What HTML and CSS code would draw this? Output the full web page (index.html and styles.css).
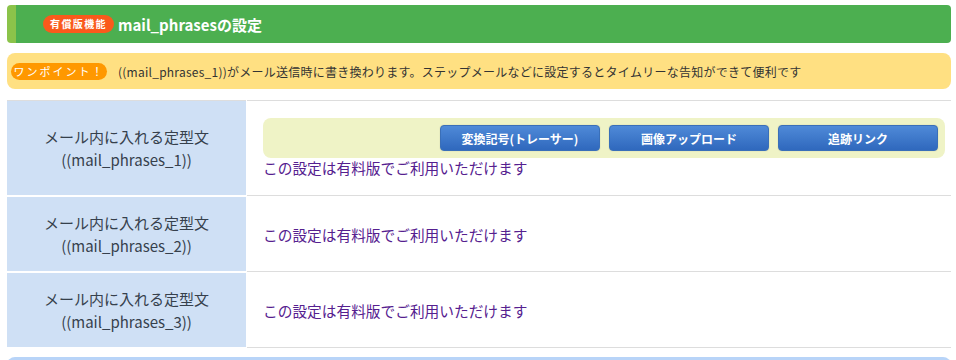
FILE: index.html
```html
<!DOCTYPE html>
<html lang="ja">
<head>
    <meta charset="UTF-8">
    <meta name="viewport" content="width=device-width, initial-scale=1.0">
    <title>mail_phrasesの設定</title>
    <link rel="stylesheet" href="styles.css">
</head>
<body>

    <div class="container">

        <!-- 見出し -->
        <div class="page-title">
            <span class="paid-badge">有償版機能</span>
            <h1>mail_phrasesの設定</h1>
        </div>

        <!-- ワンポイント -->
        <div class="tip">
            <span class="tip-badge">ワンポイント！</span>
            <p>((mail_phrases_1))がメール送信時に書き換わります。ステップメールなどに設定するとタイムリーな告知ができて便利です</p>
        </div>

        <table class="setting-table">
            <tr>
                <th>メール内に入れる定型文<br>((mail_phrases_1))</th>
                <td class="first-cell">
                    <div class="tool-box">
                        <button class="tool-btn">変換記号(トレーサー)</button>
                        <button class="tool-btn">画像アップロード</button>
                        <button class="tool-btn">追跡リンク</button>
                    </div>
                    <span class="paid-note">この設定は有料版でご利用いただけます</span>
                </td>
            </tr>
            <tr>
                <th>メール内に入れる定型文<br>((mail_phrases_2))</th>
                <td><span class="paid-note">この設定は有料版でご利用いただけます</span></td>
            </tr>
            <tr>
                <th>メール内に入れる定型文<br>((mail_phrases_3))</th>
                <td><span class="paid-note">この設定は有料版でご利用いただけます</span></td>
            </tr>
        </table>

        <div class="next-bar"></div>

    </div>

</body>
</html>
```

FILE: styles.css
```css
body {
    font-family: "Noto Sans CJK JP", "Noto Sans", sans-serif;
    background-color: #fff;
    color: #333;
    margin: 0;
    padding: 0;
}
.container {
    padding: 5px 5px 0 7px;
}
.page-title {
    display: flex;
    align-items: center;
    height: 38px;
    background-color: #4caf50;
    border-left: 9px solid #8bc34a;
    border-radius: 4px;
    padding-left: 27px;
}
.page-title h1 {
    margin: 0 0 0 4px;
    font-size: 15px;
    font-weight: bold;
    color: #fff;
}
.paid-badge {
    display: inline-block;
    height: 18px;
    line-height: 18px;
    padding: 0 7px;
    border-radius: 9px;
    background-color: #fa5a1c;
    color: #fff;
    font-size: 10px;
    font-weight: bold;
    letter-spacing: 1.4px;
}
.tip {
    display: flex;
    align-items: center;
    height: 36px;
    margin-top: 10px;
    padding-left: 4px;
    background-color: #ffe082;
    border-radius: 8px;
}
.tip p {
    margin: 0 0 0 11px;
    font-size: 12px;
    letter-spacing: 0.25px;
    color: #333;
}
.tip-badge {
    display: inline-block;
    width: 96px;
    height: 17px;
    line-height: 17px;
    text-align: center;
    border-radius: 9px;
    background-color: #ff9800;
    color: #fff;
    font-size: 11px;
    letter-spacing: 2px;
}
.setting-table {
    width: 100%;
    margin-top: 11px;
    border-collapse: collapse;
    border-top: 1px solid #ddd;
}
.setting-table th {
    width: 239px;
    padding: 14px 0;
    background-color: #cfe0f5;
    border-bottom: 2px solid #fff;
    border-right: 1px solid #fff;
    font-size: 15px;
    font-weight: normal;
    line-height: 23px;
    color: #36404c;
}
.setting-table td {
    padding: 17px 6px 16px 16px;
    border-bottom: 1px solid #ddd;
    vertical-align: middle;
}
.setting-table .first-cell {
    padding-bottom: 18px;
}
.tool-box {
    display: flex;
    justify-content: flex-end;
    gap: 9px;
    padding: 7px 7px 7px 0;
    background-color: #eff3c6;
    border-radius: 8px;
}
.tool-btn {
    width: 160px;
    height: 26px;
    border: 1px solid #3a6fb8;
    border-radius: 4px;
    background: linear-gradient(#4f8ad8, #2f68bd);
    box-shadow: 0 0 1px rgba(0, 0, 0, 0.3);
    color: #fff;
    font-family: inherit;
    font-size: 12px;
    font-weight: bold;
}
.paid-note {
    display: block;
    font-size: 14.7px;
    color: #55208f;
    line-height: 19px;
}
.next-bar {
    height: 10px;
    margin-top: 8px;
    background-color: #b8d4f8;
    border-radius: 8px 8px 0 0;
}
```
